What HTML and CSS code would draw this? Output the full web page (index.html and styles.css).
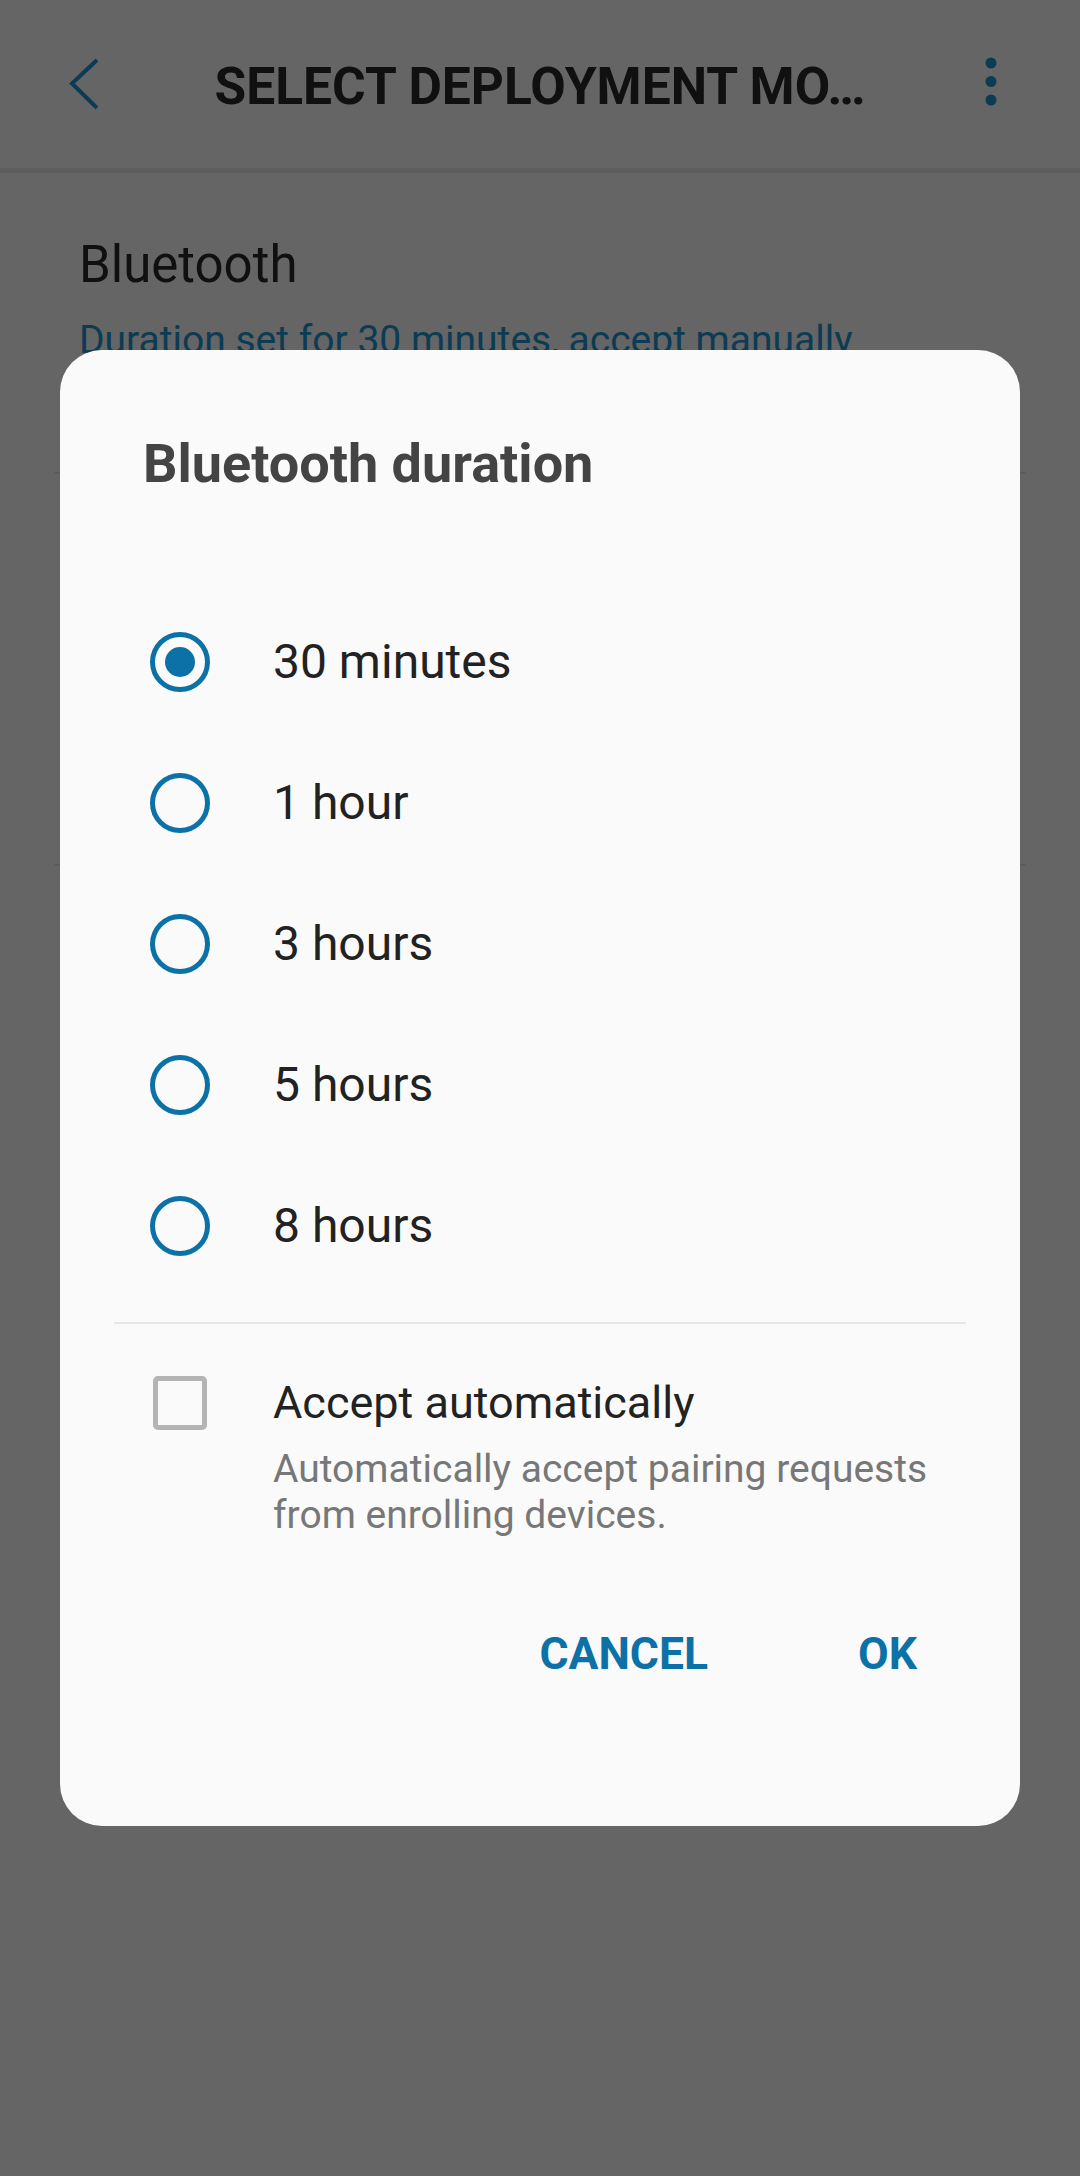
FILE: index.html
```html
<!DOCTYPE html>
<html lang="en">
<head>
<meta charset="utf-8">
<title>Select deployment mode</title>
<link rel="stylesheet" href="styles.css">
</head>
<body>
<div class="screen">
  <header class="appbar">
    <svg class="back" viewBox="0 0 40 60" width="40" height="60" aria-hidden="true">
      <polyline points="33,6 8,29.5 33,54" fill="none" stroke="currentColor" stroke-width="4"/>
    </svg>
    <h1 class="appbar-title">SELECT DEPLOYMENT MO…</h1>
    <svg class="kebab" viewBox="0 0 12 50" width="12" height="50" aria-hidden="true">
      <circle cx="6" cy="6" r="5.5" fill="currentColor"/>
      <circle cx="6" cy="24.5" r="5.5" fill="currentColor"/>
      <circle cx="6" cy="43" r="5.5" fill="currentColor"/>
    </svg>
  </header>

  <main class="list">
    <div class="item">
      <div class="item-title">Bluetooth</div>
      <div class="item-sub">Duration set for 30 minutes, accept manually</div>
    </div>
    <div class="item item-second"></div>
  </main>

  <div class="scrim">
    <section class="dialog" role="dialog">
      <h2 class="dialog-title">Bluetooth duration</h2>
      <div class="options">
        <div class="option"><span class="radio on"></span><span class="option-label">30 minutes</span></div>
        <div class="option"><span class="radio"></span><span class="option-label">1 hour</span></div>
        <div class="option"><span class="radio"></span><span class="option-label">3 hours</span></div>
        <div class="option"><span class="radio"></span><span class="option-label">5 hours</span></div>
        <div class="option"><span class="radio"></span><span class="option-label">8 hours</span></div>
      </div>
      <hr class="divider">
      <div class="check-row">
        <span class="checkbox"></span>
        <div class="check-text">
          <div class="check-label">Accept automatically</div>
          <div class="check-desc">Automatically accept pairing requests from enrolling devices.</div>
        </div>
      </div>
      <div class="actions">
        <span class="btn">CANCEL</span>
        <span class="btn">OK</span>
      </div>
    </section>
  </div>
</div>
</body>
</html>
```

FILE: styles.css
```css
* { box-sizing: border-box; }

html, body {
  margin: 0;
  padding: 0;
}

body {
  width: 1080px;
  height: 2176px;
  background: #fcfcfc;
  font-family: Roboto, "Liberation Sans", sans-serif;
  overflow: hidden;
}

.screen {
  width: 1080px;
  height: 2176px;
  position: relative;
}

/* App bar */
.appbar {
  height: 173px;
  display: grid;
  grid-template-columns: 1fr auto 1fr;
  align-items: center;
  border-bottom: 5px solid #ececec;
  color: #1e93d2;
}

.back {
  justify-self: start;
  margin-left: 64px;
  display: block;
}

.appbar-title {
  margin: 5px 0 0 0;
  font-size: 51.5px;
  line-height: 60px;
  font-weight: 700;
  color: #2a2a2a;
  white-space: nowrap;
  letter-spacing: 0;
}

.kebab {
  justify-self: end;
  margin-right: 83px;
  margin-bottom: 4px;
  display: block;
}

/* List behind */
.list {
  display: flex;
  flex-direction: column;
}

.item {
  margin: 0 54px;
  padding: 62px 25px 0;
  height: 301px;
  border-bottom: 2px solid #e6e6e6;
}

.item-second {
  height: 392px;
}

.item-title {
  font-size: 51px;
  line-height: 60px;
  color: #2a2a2a;
}

.item-sub {
  margin-top: 20px;
  font-size: 39px;
  line-height: 50px;
  color: #1e93d2;
  white-space: nowrap;
}

/* Scrim + dialog */
.scrim {
  position: fixed;
  inset: 0;
  background: rgba(0, 0, 0, 0.6);
  display: flex;
  justify-content: center;
  align-items: flex-start;
  padding-top: 350px;
}

.dialog {
  width: 960px;
  height: 1476px;
  background: #fafafa;
  border-radius: 42px;
  padding-top: 84px;
  display: flex;
  flex-direction: column;
}

.dialog-title {
  margin: 0 0 0 83px;
  font-size: 54px;
  line-height: 60px;
  font-weight: 700;
  color: #444444;
}

.options {
  margin-top: 97px;
  display: flex;
  flex-direction: column;
}

.option {
  height: 141px;
  display: flex;
  align-items: center;
  padding-left: 90px;
}

.radio {
  width: 60px;
  height: 60px;
  border: 5px solid #0b71a6;
  border-radius: 50%;
  display: grid;
  place-items: center;
  flex: none;
}

.radio.on::after {
  content: "";
  width: 30px;
  height: 30px;
  border-radius: 50%;
  background: #0b71a6;
}

.option-label {
  margin-left: 63px;
  font-size: 48px;
  line-height: 56px;
  color: #222222;
}

.divider {
  margin: 26px 54px 0;
  height: 2px;
  border: 0;
  background: #e6e6e6;
}

.check-row {
  margin-top: 52px;
  display: flex;
  align-items: flex-start;
  padding-left: 93px;
}

.checkbox {
  width: 54px;
  height: 54px;
  border: 5px solid #b4b4b4;
  border-radius: 5px;
  flex: none;
}

.check-text {
  margin-left: 66px;
  width: 720px;
}

.check-label {
  font-size: 45px;
  line-height: 54px;
  color: #222222;
}

.check-desc {
  margin-top: 17px;
  font-size: 39px;
  line-height: 45.5px;
  color: #777777;
  width: 700px;
}

.actions {
  margin-top: 90px;
  display: flex;
  justify-content: flex-end;
  gap: 150px;
  padding-right: 103px;
}

.btn {
  font-size: 44.5px;
  line-height: 52px;
  font-weight: 700;
  color: #0b71a6;
}
```
